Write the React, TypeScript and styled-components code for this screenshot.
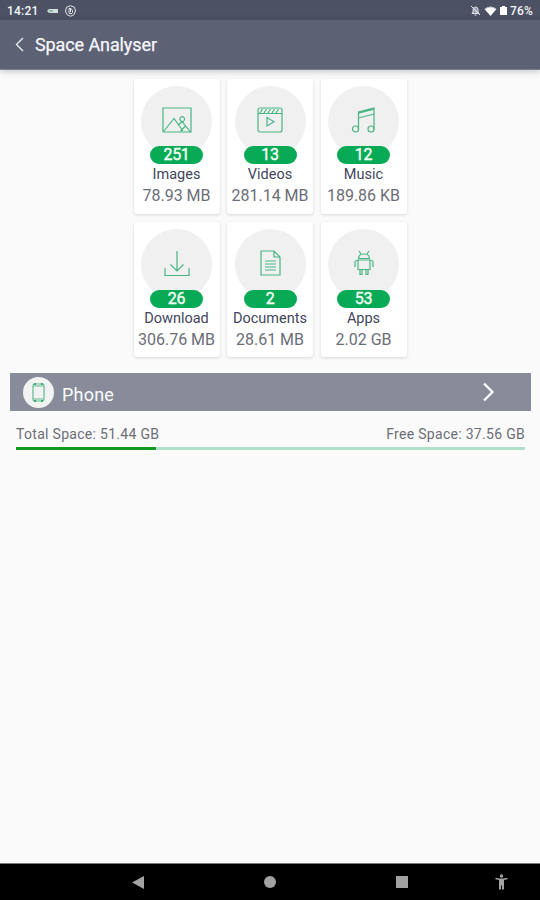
import React from "react";
import styled, { createGlobalStyle } from "styled-components";

const GlobalStyle = createGlobalStyle`
  * { box-sizing: border-box; }
  body { margin: 0; background: #fafafa; font-family: Roboto, "Liberation Sans", sans-serif; }
  svg { display: block; flex: none; }
`;

const Screen = styled.div`
  width: 540px;
  height: 900px;
  display: flex;
  flex-direction: column;
  background: #fafafa;
  overflow: hidden;
  white-space: nowrap;
`;

const StatusBar = styled.div`
  height: 20px;
  flex: none;
  display: flex;
  align-items: center;
  padding: 1px 7px 0;
  background: #4c5163;
  color: #f4f5f8;
  font-size: 12px;
  font-weight: 500;
`;

const Clock = styled.span`
  width: 40px;
  letter-spacing: 0.2px;
`;

const StatusIcons = styled.div`
  display: flex;
  align-items: center;
  gap: 6px;
`;

const Battery = styled.div`
  margin-left: auto;
  display: flex;
  align-items: center;
  gap: 3px;

  span { letter-spacing: 0.2px; }
`;

const Toolbar = styled.header`
  height: 50px;
  flex: none;
  display: flex;
  align-items: center;
  gap: 11px;
  padding: 0 0 1px 15px;
  background: #5c6174;
  border-bottom: 1px solid #7d8194;
  box-shadow: 0 1px 7px rgba(40, 60, 60, 0.3);
`;

const Title = styled.h1`
  margin: 0;
  padding-top: 1px;
  font-size: 18px;
  font-weight: 400;
  letter-spacing: -0.1px;
  color: #f6f7fb;
  -webkit-text-stroke: 0.25px #f6f7fb;
`;

const Content = styled.main`
  flex: 1;
  padding: 8.5px 0 0;
`;

const Grid = styled.section`
  display: grid;
  grid-template-columns: repeat(3, 86px);
  gap: 8.5px 7.5px;
  justify-content: center;
`;

const Card = styled.article`
  height: 135px;
  display: flex;
  flex-direction: column;
  align-items: center;
  padding-top: 7.2px;
  border-radius: 3px;
  background: #fff;
  box-shadow: 0 1px 3px rgba(0, 0, 0, 0.15);
`;

const IconDisc = styled.div`
  width: 71px;
  height: 71px;
  flex: none;
  display: grid;
  place-items: center;
  padding-bottom: 3px;
  border-radius: 50%;
  background: #f0f0f0;
`;

const Count = styled.div`
  width: 53px;
  height: 18px;
  flex: none;
  margin-top: -10.7px;
  z-index: 1;
  border-radius: 9px;
  background: #08aa55;
  color: #f3fff8;
  text-align: center;
  font-size: 16px;
  line-height: 18px;
  letter-spacing: -0.3px;
  -webkit-text-stroke: 0.4px #f3fff8;
`;

const Label = styled.div`
  height: 20px;
  line-height: 22px;
  font-size: 14.5px;
  color: #42465c;
`;

const Size = styled.div`
  height: 21px;
  line-height: 23px;
  font-size: 16px;
  color: #6b6d77;
`;

const StorageRow = styled.div`
  height: 38px;
  margin: 16px 9px 0 10px;
  padding: 0 36px 0 13px;
  display: flex;
  align-items: center;
  background: #888c9a;
`;

const PhoneDisc = styled.div`
  width: 31px;
  height: 31px;
  display: grid;
  place-items: center;
  border-radius: 50%;
  background: #f1f3f2;
`;

const StorageName = styled.span`
  flex: 1;
  padding: 4px 0 0 8px;
  color: #fafbfd;
  font-size: 18px;
  letter-spacing: 0.2px;
`;

const SpaceInfo = styled.div`
  margin: 14px 15px 0 16px;
  display: flex;
  justify-content: space-between;
  height: 22px;
  line-height: 18px;
  font-size: 14px;
  letter-spacing: 0.3px;
  color: #6c6e77;
`;

const Track = styled.div`
  height: 3px;
  margin: 0 15px 0 16px;
  background: #b0e0c9;
`;

const Used = styled.div`
  width: 27.5%;
  height: 100%;
  background: #149a20;
`;

const NavBar = styled.nav`
  height: 37px;
  flex: none;
  display: grid;
  grid-template-columns: 72px 132px 132px 132px 66px;
  justify-items: center;
  align-items: center;
  background: #000;
  border-top: 1px solid #777;

  svg:first-child { grid-column: 2; }
`;

const Stroked = styled.svg`
  fill: none;
  stroke: #49b585;
  stroke-width: 1.2;
`;

const ImageIcon = () => (
  <Stroked width="30" height="26" viewBox="0 0 30 26">
    <path d="M1 1h28v24H1zM2 24l10-12.500 9 12.500M16.500 18l3.500-3.500 8 10M18.500 24l5-5" />
    <path d="M19.500 14.500q-3-2.500-.5-4.500 2.500-1 3.500 1.500.500 2-1.500 3.500z" />
  </Stroked>
);
const VideoIcon = () => (
  <Stroked width="26" height="26" viewBox="0 0 26 26">
    <rect x="1" y="1" width="24" height="24" rx="2" />
    <path d="M1 6.500h24M3 6l2.500-4M7 6l2.500-4M11 6l2.500-4M15 6l2.500-4M19 6l2.500-4M10 10.500v8.500l7-4.250z" />
  </Stroked>
);
const MusicIcon = () => (
  <Stroked width="26" height="28" viewBox="0 0 26 28">
    <path d="M7.500 23V6L23 2v21M7.500 12L23 8M7.500 7.200L23 3.200" />
    <circle cx="4.500" cy="23" r="3" />
    <circle cx="20" cy="23" r="3" />
  </Stroked>
);
const DownloadIcon = () => (
  <Stroked width="26" height="27" viewBox="0 0 26 27">
    <path d="M13 1v20M6.500 14.500l6.500 6.500 6.500-6.500M1 18v7.500h24V18" />
  </Stroked>
);
const DocumentIcon = () => (
  <Stroked width="21" height="28" viewBox="0 0 21 28">
    <path d="M1 2h13l6 6v18H1zM14 2v6h6M5 12h11M5 15h11M5 18h11M5 21h11" />
  </Stroked>
);
const AndroidIcon = () => (
  <Stroked width="20" height="26" viewBox="0 0 20 26">
    <path d="M5 1l2 3M15 1l-2 3M4.500 8.500Q4.500 4 10 4t5.500 4.500zM4 10h12v9.500H4zM3.500 10.500H2.500q-1.500 0-1.500 1.500v5M16.500 10.500h1q1.500 0 1.500 1.500v5M6 20v4.500h2V20M12 20v4.500h2V20" />
  </Stroked>
);

const categories = [
  { label: "Images", count: 251, size: "78.93 MB", Icon: ImageIcon },
  { label: "Videos", count: 13, size: "281.14 MB", Icon: VideoIcon },
  { label: "Music", count: 12, size: "189.86 KB", Icon: MusicIcon },
  { label: "Download", count: 26, size: "306.76 MB", Icon: DownloadIcon },
  { label: "Documents", count: 2, size: "28.61 MB", Icon: DocumentIcon },
  { label: "Apps", count: 53, size: "2.02 GB", Icon: AndroidIcon },
];

export default function App() {
  return (
    <Screen>
      <GlobalStyle />
      <StatusBar>
        <Clock>14:21</Clock>
        <StatusIcons>
          <svg width="12" height="6" viewBox="0 0 12 6">
            <path d="M0 3l2-2h9v4H2z" fill="#d6dedd" />
            <path d="M2 3h4" stroke="#77b69a" strokeWidth="1.5" />
          </svg>
          <svg width="11" height="12" viewBox="0 0 11 12" fill="none" stroke="#e4e6ec">
            <path d="M5.5.7l4 1.6 1 3.7-1.5 3.6-3.5 1.7L2 9.6.5 6l1-3.7z" />
            <path d="M4 3.5h2l1.5 2v2L6 9 4 8zM5.5 4v3" />
          </svg>
        </StatusIcons>
        <Battery>
          <svg width="11" height="11" viewBox="0 0 11 11">
            <path d="M2 8.5h7L8 7V4.5Q8 2 5.5 2T3 4.5V7zM4.5 10h2" fill="#9da2af" stroke="#d9dce4" />
            <path d="M1 1l9 9" stroke="#e8eaf0" />
          </svg>
          <svg width="13" height="10" viewBox="0 0 13 10">
            <path d="M.5 3Q6.500-1.500 12.500 3L6.500 10z" fill="#fff" />
            <path d="M1 3Q6.500-1 12 3" fill="none" stroke="#b5bac5" />
          </svg>
          <svg width="7" height="9" viewBox="0 0 7 9">
            <path d="M0 1h2V0h3v1h2v8H0z" fill="#fff" />
          </svg>
          <span>76%</span>
        </Battery>
      </StatusBar>
      <Toolbar>
        <svg width="9" height="15" viewBox="0 0 9 15">
          <path d="M8 1L1.500 7.500 8 14" fill="none" stroke="#eceef4" strokeWidth="1.4" />
        </svg>
        <Title>Space Analyser</Title>
      </Toolbar>
      <Content>
        <Grid>
          {categories.map(({ label, count, size, Icon }) => (
            <Card key={label}>
              <IconDisc><Icon /></IconDisc>
              <Count>{count}</Count>
              <Label>{label}</Label>
              <Size>{size}</Size>
            </Card>
          ))}
        </Grid>
        <StorageRow>
          <PhoneDisc>
            <svg width="13" height="19" viewBox="0 0 13 19" fill="none" stroke="#65bb91">
              <rect x="1" y="1" width="11" height="17" rx="1.500" strokeWidth="1.2" />
              <path d="M1.500 3h10M1.500 16h10" />
              <path d="M2 1h2M9 1h2M2 18h2M9 18h2" stroke="#159e59" strokeWidth="1.500" />
            </svg>
          </PhoneDisc>
          <StorageName>Phone</StorageName>
          <svg width="13" height="20" viewBox="0 0 13 20">
            <path d="M2 1.500l8.500 8.500L2 18.500" fill="none" stroke="#fff" strokeWidth="2.2" />
          </svg>
        </StorageRow>
        <SpaceInfo>
          <span>Total Space: 51.44 GB</span>
          <span>Free Space: 37.56 GB</span>
        </SpaceInfo>
        <Track><Used /></Track>
      </Content>
      <NavBar>
        <svg width="12" height="13" viewBox="0 0 12 13"><path d="M0 6.500L12 0v13z" fill="#a2a2a2" /></svg>
        <svg width="12" height="12" viewBox="0 0 12 12"><circle cx="6" cy="6" r="6" fill="#a2a2a2" /></svg>
        <svg width="12" height="12" viewBox="0 0 12 12"><path d="M0 0h12v12H0z" fill="#a2a2a2" /></svg>
        <svg width="13" height="16" viewBox="0 0 13 16" fill="#a2a2a2">
          <circle cx="6.500" cy="2" r="1.700" />
          <path d="M.5 3.700l4 .8h4l4-.8v1.500l-3.500.8v9.500H7v-4H6v4H4V6L.5 5.200z" />
        </svg>
      </NavBar>
    </Screen>
  );
}
